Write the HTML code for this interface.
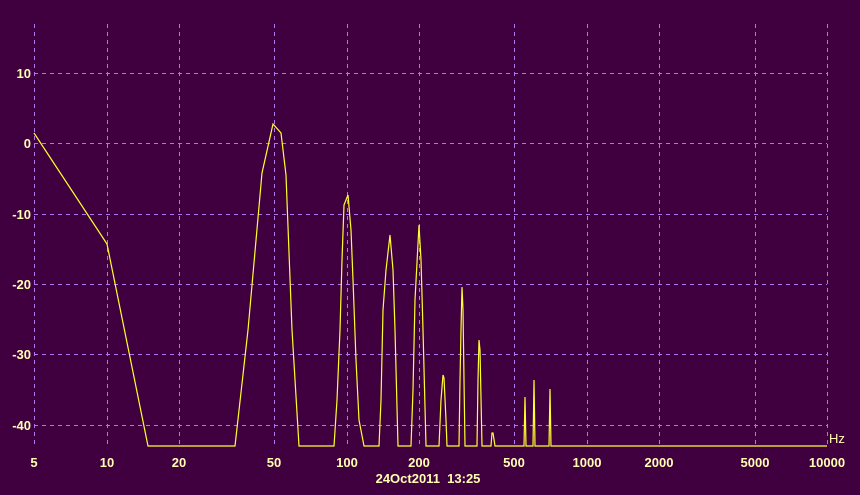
<!DOCTYPE html>
<html><head><style>
body{margin:0;background:#400040;}
svg{display:block}
text{font-family:"Liberation Sans",sans-serif;font-weight:bold;font-size:13px;fill:#ffffb0}
</style></head><body>
<svg width="860" height="495" viewBox="0 0 860 495">
<rect width="860" height="495" fill="#400040"/>
<g stroke="#a878f0" stroke-width="1" stroke-dasharray="4,4">
<line x1="34.5" y1="24" x2="34.5" y2="446"/>
<line x1="107.5" y1="24" x2="107.5" y2="446"/>
<line x1="179.5" y1="24" x2="179.5" y2="446"/>
<line x1="274.5" y1="24" x2="274.5" y2="446"/>
<line x1="347.5" y1="24" x2="347.5" y2="446"/>
<line x1="419.5" y1="24" x2="419.5" y2="446"/>
<line x1="514.5" y1="24" x2="514.5" y2="446"/>
<line x1="587.5" y1="24" x2="587.5" y2="446"/>
<line x1="659.5" y1="24" x2="659.5" y2="446"/>
<line x1="755.5" y1="24" x2="755.5" y2="446"/>
<line x1="827.5" y1="24" x2="827.5" y2="446"/>
<line x1="34" y1="73.5" x2="827" y2="73.5"/>
<line x1="34" y1="143.5" x2="827" y2="143.5"/>
<line x1="34" y1="214.5" x2="827" y2="214.5"/>
<line x1="34" y1="284.5" x2="827" y2="284.5"/>
<line x1="34" y1="354.5" x2="827" y2="354.5"/>
<line x1="34" y1="425.5" x2="827" y2="425.5"/>
</g>
<polyline fill="none" stroke="#ffff30" stroke-width="1.2" points="34,133 107,244 148,446 235,446 248,330 262,173 273,124 281,133 286,175 292,330 299,446 334,446 337,400 340,330 342,260 344,205 348,195 351,230 353,280 356,360 359,420 364,446 379,446 381,400 383,310 386,270 390,235 393,270 395,330 398,446 411,446 413,390 415,300 419,225 421,260 423,330 426,446 439,446 441,400 443,375 444,378 446,420 447,446 459,446 460,380 461,330 462,287 463,310 464,380 465,446 477,446 478,380 479,340 480,350 482,446 491,446 492,433 493,433 495,446 524,446 525,397 526,446 533,446 534,380 535,446 549,446 550,389 551,446 827,446"/>
<g text-anchor="end">
<text x="31" y="78">10</text>
<text x="31" y="148">0</text>
<text x="31" y="219">-10</text>
<text x="31" y="289">-20</text>
<text x="31" y="359">-30</text>
<text x="31" y="430">-40</text>
</g>
<g text-anchor="middle">
<text x="34" y="467">5</text>
<text x="107" y="467">10</text>
<text x="179" y="467">20</text>
<text x="274" y="467">50</text>
<text x="347" y="467">100</text>
<text x="419" y="467">200</text>
<text x="514" y="467">500</text>
<text x="587" y="467">1000</text>
<text x="659" y="467">2000</text>
<text x="755" y="467">5000</text>
<text x="827" y="467">10000</text>
<text x="428" y="483" xml:space="preserve" style="white-space:pre">24Oct2011  13:25</text>
</g>
<text x="829" y="443" style="font-weight:normal">Hz</text>
</svg>
</body></html>
